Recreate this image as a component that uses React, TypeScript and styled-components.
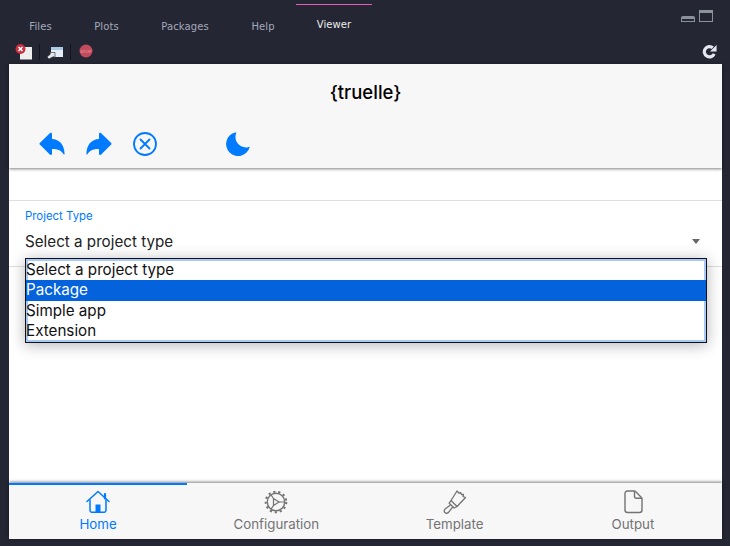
import React from "react";
import styled, { createGlobalStyle } from "styled-components";

const BLUE = "#007aff";
const GREY = "#737373";

const Global = createGlobalStyle`
  html, body {
    margin: 0;
    padding: 0;
    background: #252633;
  }
  * {
    box-sizing: border-box;
  }
`;

const Page = styled.div`
  width: 730px;
  height: 546px;
  display: flex;
  flex-direction: column;
  background: #252633;
  overflow: hidden;
  font-family: Inter, "Liberation Sans", sans-serif;
`;

const TabBar = styled.div`
  height: 42px;
  display: flex;
  padding-top: 4px;
  padding-left: 8px;
  padding-right: 17px;
`;

const RTab = styled.div<{ $active?: boolean; $width: number }>`
  height: 30px;
  padding: ${(p) => (p.$active ? "12px" : "14px")} 0 0;
  width: ${(p) => p.$width}px;
  text-align: center;
  border-top: 1px solid ${(p) => (p.$active ? "#e45eb4" : "transparent")};
  color: ${(p) => (p.$active ? "#eceded" : "#a3aabb")};
  font-family: "DejaVu Sans", sans-serif;
  font-size: 10px;
  line-height: 16px;
  letter-spacing: 0.1px;
`;

const WindowButtons = styled.div`
  margin-left: auto;
  display: flex;
  align-items: flex-end;
  gap: 4px;
  height: 18px;
`;

const Minimize = styled.div`
  width: 14px;
  height: 6px;
  border: 1px solid #8b929b;
  border-top-width: 3px;
  border-radius: 2px 2px 0 0;
`;

const Maximize = styled.div`
  width: 14px;
  height: 12px;
  border: 1px solid #8b929b;
  border-top-width: 3px;
`;

const ToolBar = styled.div`
  height: 22px;
  display: flex;
  align-items: flex-start;
  padding: 2px 13px 0 15px;
  gap: 7px;
`;

const ToolSep = styled.div`
  width: 1px;
  height: 16px;
  background: #14151c;
`;

const FirstSep = styled(ToolSep)`
  margin-left: -1px;
`;

const StopSign = styled.svg`
  margin-left: 1px;
`;

const Refresh = styled.svg`
  margin-left: auto;
`;

const Panel = styled.div`
  margin: 0 8px 7px 9px;
  flex: 1;
  min-height: 0;
  display: flex;
  flex-direction: column;
  background: #fff;
`;

const Navbar = styled.header`
  height: 104px;
  flex-shrink: 0;
  background: #f7f7f8;
  box-shadow: 0 1px 3px rgba(0, 0, 0, 0.5);
  position: relative;
  display: flex;
  flex-direction: column;
`;

const Title = styled.h1`
  margin: 0;
  height: 56px;
  text-align: center;
  font-size: 18.5px;
  font-weight: 500;
  line-height: 56px;
  color: #000;
`;

const Actions = styled.div`
  display: flex;
  padding-left: 20px;
  margin-top: 12px;
`;

const ActionIcon = styled.div<{ $skip?: boolean }>`
  width: 46.5px;
  height: 24px;
  display: flex;
  justify-content: center;
  margin-left: ${(p) => (p.$skip ? "46.5px" : "0")};
`;

const Content = styled.main`
  flex: 1;
  padding-top: 32px;
`;

const FieldRow = styled.div`
  position: relative;
  height: 67px;
  padding: 8px 16px 0;
  border-top: 1px solid #dedede;
  border-bottom: 1px solid #dedede;
`;

const FieldLabel = styled.div`
  font-size: 11.4px;
  line-height: 14px;
  color: ${BLUE};
`;

const FieldValue = styled.div`
  margin-top: 6px;
  font-size: 15.2px;
  line-height: 26px;
  color: #222;
`;

const Caret = styled.div`
  position: absolute;
  right: 22px;
  top: 38px;
  width: 0;
  height: 0;
  border-left: 4.5px solid transparent;
  border-right: 4.5px solid transparent;
  border-top: 5px solid #666;
`;

const Dropdown = styled.ul`
  position: absolute;
  left: 16px;
  top: 57px;
  width: 682px;
  height: 85px;
  margin: 0;
  padding: 1px 0;
  list-style: none;
  background: #fff;
  border: 1px solid #10131a;
  box-shadow: 0 2px 14px rgba(0, 0, 0, 0.3), inset 0 0 0 2px #a9c8f5;
  z-index: 2;
`;

const Option = styled.li<{ $selected?: boolean }>`
  height: 20.25px;
  font-size: 15.2px;
  line-height: 20.5px;
  color: ${(p) => (p.$selected ? "#fff" : "#111")};
  background: ${(p) => (p.$selected ? "#0463dc" : "transparent")};
`;

const BottomTabs = styled.nav`
  height: 56px;
  flex-shrink: 0;
  display: grid;
  grid-template-columns: repeat(4, 1fr);
  background: #f7f7f8;
  box-shadow: 0 -1px 3px rgba(0, 0, 0, 0.5);
  position: relative;
`;

const BottomTab = styled.div<{ $active?: boolean }>`
  display: flex;
  flex-direction: column;
  align-items: center;
  padding-top: ${(p) => (p.$active ? "5px" : "7px")};
  border-top: ${(p) => (p.$active ? `2px solid ${BLUE}` : "none")};
  color: ${(p) => (p.$active ? BLUE : GREY)};
`;

const TabIcon = styled.svg`
  display: block;
`;

const TabLabel = styled.span`
  margin-top: 2px;
  font-size: 13.3px;
  line-height: 17px;
`;

const tabs = [
  { name: "Files", width: 65 },
  { name: "Plots", width: 67 },
  { name: "Packages", width: 90 },
  { name: "Help", width: 66 },
  { name: "Viewer", width: 76, active: true },
];

const options = ["Select a project type", "Package", "Simple app", "Extension"];

const ReplyIcon = ({ flip }: { flip?: boolean }) => (
  <svg width="26" height="24" viewBox="0 0 26 24" fill={BLUE} style={flip ? { transform: "scaleX(-1)" } : undefined}>
    <path d="M.8 11 10.800 1.200c.8-.8 2.200-.3 2.200.9v4.900c7.400.3 12.400 5.600 12.600 15 0 .6-.7.700-1 .2-2.200-3.700-5.200-5.200-11.600-5.300v4.800c0 1.200-1.400 1.700-2.200.9L.8 12.600c-.5-.5-.5-1.100 0-1.600Z" />
  </svg>
);

const CloseIcon = () => (
  <svg width="24" height="24" viewBox="0 0 24 24" fill="none" stroke={BLUE} strokeWidth="1.800" strokeLinecap="round">
    <circle cx="12" cy="12" r="11" />
    <path d="M7.500 7.500l9 9M16.500 7.500l-9 9" />
  </svg>
);

const MoonIcon = () => (
  <svg width="24" height="24" viewBox="0 0 24 24" fill={BLUE}>
    <path d="M9.300.4A12 12 0 1 0 23.600 15.600C23.800 15 23.300 14.700 22.800 14.900 14.900 17.500 6.900 9.500 10.200 1.200 10.400.7 9.900.2 9.300.4Z" />
  </svg>
);

const HomeIcon = () => (
  <TabIcon width="24" height="24" viewBox="0 0 24 24" fill="none" stroke="currentColor" strokeWidth="1.500" strokeLinecap="round" strokeLinejoin="round">
    <path d="M1 11.500 12 1.500l11 10" />
    <path d="M19 4v4.500" strokeWidth="2.200" />
    <path d="M4 10v10.500c0 1 .7 1.700 1.700 1.700h12.600c1 0 1.700-.7 1.700-1.700V10" />
    <path d="M9.500 22v-7.500h5V22Z" fill="currentColor" stroke="none" />
  </TabIcon>
);

const GearIcon = () => (
  <TabIcon width="24" height="24" viewBox="0 0 24 24" fill="none" stroke="currentColor">
    <circle cx="12" cy="12" r="8.700" strokeWidth="1.400" />
    <circle cx="12" cy="12" r="10.300" strokeWidth="2" strokeDasharray="2.200 2.850" />
    <path d="M9.500 8.500 15 12l-5.500 3.500Z" strokeWidth="1.200" strokeLinejoin="round" />
    <path d="M15 12h5M9.500 8.500 7 4.800M9.500 15.500 7 19.200" strokeWidth="1.200" />
  </TabIcon>
);

const BrushIcon = () => (
  <TabIcon width="24" height="24" viewBox="0 0 24 24" fill="none" stroke="currentColor" strokeWidth="1.300" strokeLinejoin="round">
    <path d="M14 1 16 3.200 17.500 2.500 18.500 4.500 20.500 4.500 20 6.500 22.500 7.500 14 16.500 8 10.500Z" />
    <path d="M8 10.500 6.200 13.200l5 4.800 2.800-1.500" />
    <path d="M7.500 15 2.400 18.800a2.400 2.400 0 1 0 3.300 3.300L9.700 17" />
  </TabIcon>
);

const DocIcon = () => (
  <TabIcon width="24" height="24" viewBox="0 0 24 24" fill="none" stroke="currentColor" strokeWidth="1.400" strokeLinejoin="round">
    <path d="M6.500 1h6.700c.6 0 1 .2 1.400.6l5.800 6c.4.400.6.800.6 1.400v11c0 1.600-1 2.500-2.500 2.500H6.500C5 22.500 4 21.600 4 20V3.500C4 2 5 1 6.500 1Z" />
    <path d="M13.500 1.200v5c0 1.300.7 2 2 2h5" />
  </TabIcon>
);

export default function App() {
  return (
    <Page>
      <Global />
      <TabBar>
        {tabs.map((t) => (
          <RTab key={t.name} $width={t.width} $active={t.active}>
            {t.name}
          </RTab>
        ))}
        <WindowButtons>
          <Minimize />
          <Maximize />
        </WindowButtons>
      </TabBar>
      <ToolBar>
        <svg width="18" height="16" viewBox="0 0 18 16">
          <rect x="5" y="3" width="12" height="12.500" fill="#eeeeee" />
          <circle cx="5.500" cy="5" r="5" fill="#c8303f" />
          <path d="M3.500 3l4 4M7.500 3l-4 4" stroke="#fff" strokeWidth="1.600" />
        </svg>
        <FirstSep />
        <svg width="16" height="16" viewBox="0 0 16 16">
          <rect x="4" y="3" width="12" height="10" fill="#e6edf5" />
          <rect x="4" y="3" width="12" height="3" fill="#a9cbe4" />
          <path d="M0 13 3.500 10 2.500 8.500H8V13.500L6.500 12.500 2 15Z" fill="#e8e8e8" stroke="#252633" strokeWidth=".6" />
        </svg>
        <ToolSep />
        <StopSign width="14" height="14" viewBox="0 0 14 14">
          <circle cx="7" cy="7" r="6.500" fill="#c34b5c" />
          <text x="7" y="8.500" fontSize="4.200" textAnchor="middle" fill="#eaa5af" fontFamily="Liberation Sans">STOP</text>
        </StopSign>
        <Refresh width="15" height="15" viewBox="0 0 16 16" fill="none">
          <path d="M13 10.500A5.500 5.500 0 1 1 11.500 4" stroke="#e4e7f0" strokeWidth="3.400" />
          <path d="M15.500 1v7h-7Z" fill="#e4e7f0" />
        </Refresh>
      </ToolBar>
      <Panel>
        <Navbar>
          <Title>{"{truelle}"}</Title>
          <Actions>
            <ActionIcon>
              <ReplyIcon />
            </ActionIcon>
            <ActionIcon>
              <ReplyIcon flip />
            </ActionIcon>
            <ActionIcon>
              <CloseIcon />
            </ActionIcon>
            <ActionIcon $skip>
              <MoonIcon />
            </ActionIcon>
          </Actions>
        </Navbar>
        <Content>
          <FieldRow>
            <FieldLabel>Project Type</FieldLabel>
            <FieldValue>Select a project type</FieldValue>
            <Caret />
            <Dropdown>
              {options.map((o) => (
                <Option key={o} $selected={o === "Package"}>
                  {o}
                </Option>
              ))}
            </Dropdown>
          </FieldRow>
        </Content>
        <BottomTabs>
          <BottomTab $active>
            <HomeIcon />
            <TabLabel>Home</TabLabel>
          </BottomTab>
          <BottomTab>
            <GearIcon />
            <TabLabel>Configuration</TabLabel>
          </BottomTab>
          <BottomTab>
            <BrushIcon />
            <TabLabel>Template</TabLabel>
          </BottomTab>
          <BottomTab>
            <DocIcon />
            <TabLabel>Output</TabLabel>
          </BottomTab>
        </BottomTabs>
      </Panel>
    </Page>
  );
}
